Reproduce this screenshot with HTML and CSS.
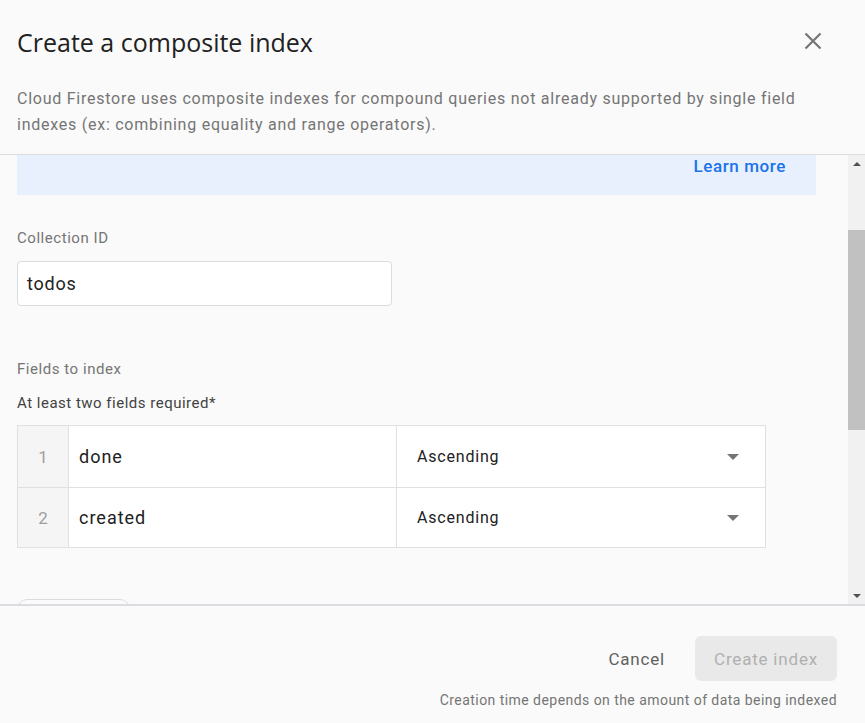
FILE: index.html
```html
<!DOCTYPE html>
<html>
<head>
<meta charset="utf-8">
<link rel="stylesheet" href="styles.css">
</head>
<body>
<div class="dialog">
  <header class="head">
    <div class="title-row">
      <h1 class="title">Create a composite index</h1>
      <button class="close" aria-label="Close">
        <svg width="18" height="18" viewBox="0 0 18 18"><path d="M1.5 1.5 L16.5 16.5 M16.5 1.5 L1.5 16.5" stroke="#757575" stroke-width="2.2" fill="none"/></svg>
      </button>
    </div>
    <p class="desc">Cloud Firestore uses composite indexes for compound queries not already supported by single field indexes (ex: combining equality and range operators).</p>
  </header>
  <div class="body">
    <div class="scroll">
      <div class="info"><a class="learn">Learn more</a></div>
      <div class="label">Collection ID</div>
      <div class="input">todos</div>
      <div class="label fields-label">Fields to index</div>
      <div class="req">At least two fields required*</div>
      <div class="table">
        <div class="row">
          <div class="num">1</div>
          <div class="field">done</div>
          <div class="order">Ascending<span class="caret"></span></div>
        </div>
        <div class="row">
          <div class="num">2</div>
          <div class="field">created</div>
          <div class="order">Ascending<span class="caret"></span></div>
        </div>
      </div>
      <div class="add-btn"></div>
    </div>
    <div class="scrollbar">
      <div class="arrow up"></div>
      <div class="track">
        <div class="thumb"></div>
      </div>
      <div class="arrow down"></div>
    </div>
  </div>
  <footer class="foot">
    <div class="actions">
      <button class="cancel">Cancel</button>
      <button class="create">Create index</button>
    </div>
    <div class="note">Creation time depends on the amount of data being indexed</div>
  </footer>
</div>
</body>
</html>
```
FILE: styles.css
```css
* { box-sizing: border-box; }
html, body { margin: 0; padding: 0; }
body {
  background: #fafafa;
  font-family: Roboto, "Liberation Sans", sans-serif;
  color: #212121;
}
.dialog {
  width: 865px;
  height: 723px;
  display: flex;
  flex-direction: column;
  background: #fafafa;
}
.head {
  padding: 0 17px;
  height: 155px;
  border-bottom: 1px solid #dadce0;
  flex-shrink: 0;
}
.title-row {
  display: flex;
  align-items: center;
  justify-content: space-between;
  height: 84px;
}
.title {
  margin: 0;
  font-size: 25px;
  font-weight: 400;
  color: #212121;
  font-family: "Open Sans", Roboto, sans-serif;
}
.close {
  border: 0;
  background: none;
  padding: 0;
  margin-right: 26px;
  margin-top: -2px;
  width: 18px;
  height: 18px;
  display: flex;
}
.desc {
  margin: 2px 0 0;
  font-size: 16px;
  line-height: 26px;
  letter-spacing: 0.75px;
  color: #757575;
}
.body {
  height: 449px;
  display: flex;
  overflow: hidden;
  flex-shrink: 0;
}
.scroll {
  flex: 1;
  padding: 0 32px 0 17px;
  display: flex;
  flex-direction: column;
  align-items: flex-start;
}
.scroll > * { flex-shrink: 0; }
.info {
  width: 100%;
  height: 40px;
  background: #e8f0fe;
  display: flex;
  justify-content: flex-end;
  padding: 1px 30px 0 0;
}
.learn {
  font-size: 17px;
  font-weight: 500;
  letter-spacing: 0.6px;
  color: #1a73e8;
  line-height: 20px;
}
.label {
  margin-top: 33px;
  font-size: 15px;
  line-height: 20px;
  letter-spacing: 0.55px;
  color: #757575;
}
.fields-label { margin-top: 53px; }
.input {
  margin-top: 13px;
  width: 375px;
  height: 45px;
  background: #fff;
  border: 1px solid #dadce0;
  border-radius: 4px;
  padding: 0 9px;
  font-size: 18px;
  letter-spacing: 0.8px;
  line-height: 43px;
  color: #212121;
}
.req {
  margin-top: 14px;
  font-size: 15px;
  line-height: 20px;
  letter-spacing: 0.5px;
  color: #424242;
}
.table {
  margin-top: 12px;
  width: 749px;
  border: 1px solid #e0e0e0;
  background: #fff;
}
.row {
  display: flex;
  height: 61px;
}
.row + .row { border-top: 1px solid #e0e0e0; height: 60px; }
.num {
  width: 51px;
  background: #f5f5f5;
  border-right: 1px solid #e0e0e0;
  display: flex;
  align-items: center;
  justify-content: center;
  font-size: 17px;
  color: #9e9e9e;
}
.field {
  width: 328px;
  border-right: 1px solid #e0e0e0;
  display: flex;
  align-items: center;
  padding-left: 10px;
  font-size: 18px;
  letter-spacing: 1px;
  color: #212121;
}
.order {
  flex: 1;
  display: flex;
  align-items: center;
  justify-content: space-between;
  padding: 0 26px 0 20px;
  font-size: 16px;
  letter-spacing: 0.8px;
  color: #212121;
}
.caret {
  width: 0;
  height: 0;
  border-left: 6px solid transparent;
  border-right: 6px solid transparent;
  border-top: 6px solid #757575;
}
.add-btn {
  margin-top: 51px;
  width: 113px;
  height: 20px;
  border: 1px solid #dadce0;
  border-radius: 10px;
}
.scrollbar {
  width: 17px;
  background: #f1f1f1;
  display: flex;
  flex-direction: column;
}
.arrow {
  height: 17px;
  display: flex;
  align-items: center;
  justify-content: center;
}
.arrow.up::before {
  content: "";
  border-left: 4px solid transparent;
  border-right: 4px solid transparent;
  border-bottom: 4px solid #505050;
}
.arrow.down::before {
  content: "";
  border-left: 4px solid transparent;
  border-right: 4px solid transparent;
  border-top: 4px solid #505050;
}
.track {
  flex: 1;
  padding-top: 58px;
  display: flex;
  flex-direction: column;
  align-items: flex-end;
}
.thumb {
  width: 17px;
  height: 200px;
  background: #c1c1c1;
}
.foot {
  flex: 1;
  border-top: 2px solid #dadce0;
  padding: 0 28px 0 0;
  display: flex;
  flex-direction: column;
  align-items: flex-end;
}
.actions {
  margin-top: 30px;
  display: flex;
  align-items: center;
  gap: 30px;
}
.cancel {
  border: 0;
  background: none;
  font-family: Roboto, sans-serif;
  font-size: 17px;
  font-weight: 400;
  letter-spacing: 0.8px;
  color: #616161;
  padding: 0;
}
.create {
  border: 0;
  width: 142px;
  height: 45px;
  border-radius: 6px;
  background: #e9e9e9;
  font-family: Roboto, sans-serif;
  font-size: 17px;
  font-weight: 400;
  letter-spacing: 0.8px;
  color: #b0b0b0;
}
.note {
  margin-top: 9px;
  font-size: 14px;
  line-height: 20px;
  letter-spacing: 0.45px;
  color: #757575;
}
```
